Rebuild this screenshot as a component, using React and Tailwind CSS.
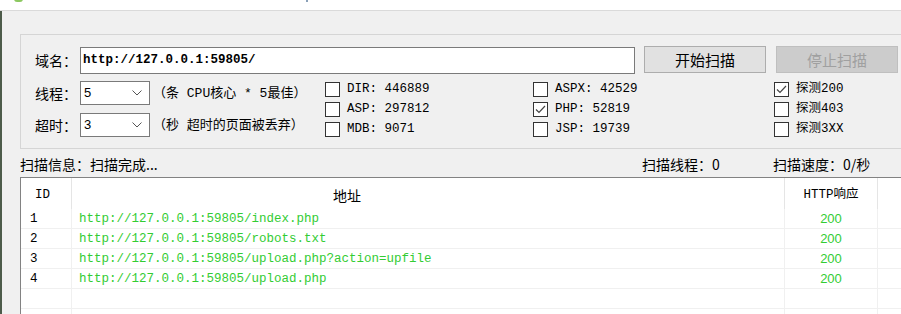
const MONO = "font-['Liberation_Mono','Noto_Sans_CJK_SC',monospace]";

const ROWS = [
  { id: 1, url: 'http://127.0.0.1:59805/index.php', code: '200' },
  { id: 2, url: 'http://127.0.0.1:59805/robots.txt', code: '200' },
  { id: 3, url: 'http://127.0.0.1:59805/upload.php?action=upfile', code: '200' },
  { id: 4, url: 'http://127.0.0.1:59805/upload.php', code: '200' },
  null,
  null,
];

function Checkbox({ checked, label }) {
  return (
    <div className="h-[20px] flex items-center gap-[7px]">
      <div className="w-[15px] h-[15px] bg-white border border-[#333333] flex items-center justify-center">
        {checked && (
          <svg width="13" height="13" viewBox="0 0 13 13" fill="none" stroke="#444" strokeWidth="1.2">
            <polyline points="2,6.5 5,9.5 11,3" />
          </svg>
        )}
      </div>
      <span className={`${MONO} text-[12.5px] leading-none`}>{label}</span>
    </div>
  );
}

function Select({ value }) {
  return (
    <div className="w-[70px] h-[24px] bg-white border border-[#7a7a7a] flex items-center justify-between pl-[3px] pr-[7px]">
      <span className="font-['Liberation_Sans',sans-serif] text-[13px]">{value}</span>
      <svg width="10" height="6" viewBox="0 0 10 6" fill="none" stroke="#555" strokeWidth="1">
        <polyline points="0.5,0.5 5,5 9.5,0.5" />
      </svg>
    </div>
  );
}

export default function App() {
  return (
    <div className="w-[901px] h-[314px] overflow-hidden bg-[#f0f0f0] flex flex-col text-black font-['Noto_Sans_CJK_SC',sans-serif]">
      {/* Title bar */}
      <div className="h-[11px] shrink-0 bg-white border-b border-[#dadada] relative">
        <div className="absolute left-[14px] top-[-4px] w-[9px] h-[6px] rounded-full bg-[#8cc860]" />
        <div className="absolute left-[306px] top-[-2px] w-[2px] h-[4px] bg-[#8aa0b8]" />
      </div>

      <div className="flex flex-1 min-h-0">
        <div className="w-[2px] shrink-0 bg-[#4d5b4a]" />
        <div className="flex-1 flex flex-col pl-[18px] pt-[23px] min-w-0">
          {/* Options group */}
          <div className="w-[900px] h-[115px] shrink-0 border border-[#d5d5d5]">
            <div className="mt-[11px] h-[27px] flex items-start">
              <span className="w-[59px] pl-[14px] h-[27px] flex items-center text-[14px] leading-none">域名：</span>
              <div className={`mt-[1px] w-[555px] h-[27px] bg-white border border-[#7a7a7a] flex items-center pl-[2px] ${MONO} text-[12.5px] font-bold`}>
                http://127.0.0.1:59805/
              </div>
              <button className="ml-[9px] w-[122px] h-[27px] bg-[#e1e1e1] border border-[#adadad] text-[15px] leading-none">
                开始扫描
              </button>
              <button className="ml-[10px] w-[122px] h-[27px] bg-[#cccccc] border border-[#bfbfbf] text-[15px] leading-none text-[#a0a0a0]">
                停止扫描
              </button>
            </div>

            <div className="mt-[6px] flex">
              <div className="w-[304px] pl-[14px] pt-[2px] flex flex-col gap-[8px]">
                <div className="h-[24px] flex items-center">
                  <span className="w-[45px] text-[14px] leading-none">线程：</span>
                  <Select value="5" />
                  <span className={`ml-[3px] ${MONO} text-[13px] leading-none`}>（条 CPU核心 * 5最佳）</span>
                </div>
                <div className="h-[24px] flex items-center">
                  <span className="w-[45px] text-[14px] leading-none">超时：</span>
                  <Select value="3" />
                  <span className={`ml-[3px] ${MONO} text-[13px] leading-none`}>（秒 超时的页面被丢弃）</span>
                </div>
              </div>
              <div className="w-[208px] flex flex-col">
                <Checkbox label="DIR: 446889" />
                <Checkbox label="ASP: 297812" />
                <Checkbox label="MDB: 9071" />
              </div>
              <div className="w-[241px] flex flex-col">
                <Checkbox label="ASPX: 42529" />
                <Checkbox checked label="PHP: 52819" />
                <Checkbox label="JSP: 19739" />
              </div>
              <div className="flex flex-col">
                <Checkbox checked label="探测200" />
                <Checkbox label="探测403" />
                <Checkbox label="探测3XX" />
              </div>
            </div>
          </div>

          {/* Status line */}
          <div className="h-[28px] shrink-0 flex items-center pt-[2px] text-[14px] leading-none">
            <span className="w-[622px]">扫描信息：扫描完成...</span>
            <span className="w-[131px]">扫描线程：0</span>
            <span>扫描速度：0/秒</span>
          </div>

          {/* Result table */}
          <div className="w-[900px] flex-1 bg-white border-t border-l border-[#828282] flex flex-col">
            <div className="h-[31px] shrink-0 flex items-stretch">
              <div className={`w-[51px] shrink-0 flex items-center pt-[3px] pl-[14px] border-r border-[#e5e5e5] ${MONO} text-[12.5px]`}>ID</div>
              <div className="w-[713px] shrink-0 flex items-center pt-[3px] pl-[261px] border-r border-[#e5e5e5] text-[14px]">地址</div>
              <div className={`w-[93px] shrink-0 flex items-center justify-center pt-[3px] border-r border-[#e5e5e5] ${MONO} text-[12.5px]`}>HTTP响应</div>
              <div className="flex-1" />
            </div>
            {ROWS.map((row, i) => (
              <div key={i} className="h-[20px] shrink-0 flex border-b border-[#f0f0f0]">
                <div className={`w-[51px] shrink-0 pl-[9px] pt-[2px] flex items-center border-r border-[#f0f0f0] ${MONO} text-[12.5px]`}>
                  {row?.id}
                </div>
                <div className={`w-[713px] shrink-0 pl-[7px] pt-[2px] flex items-center border-r border-[#f0f0f0] ${MONO} text-[12.5px] text-[#33cc33]`}>
                  {row?.url}
                </div>
                <div className="w-[93px] shrink-0 pt-[1px] flex items-center justify-center border-r border-[#f0f0f0] font-['Liberation_Sans',sans-serif] text-[13px] text-[#33cc33]">
                  {row?.code}
                </div>
                <div className="flex-1" />
              </div>
            ))}
          </div>
        </div>
      </div>
    </div>
  );
}
